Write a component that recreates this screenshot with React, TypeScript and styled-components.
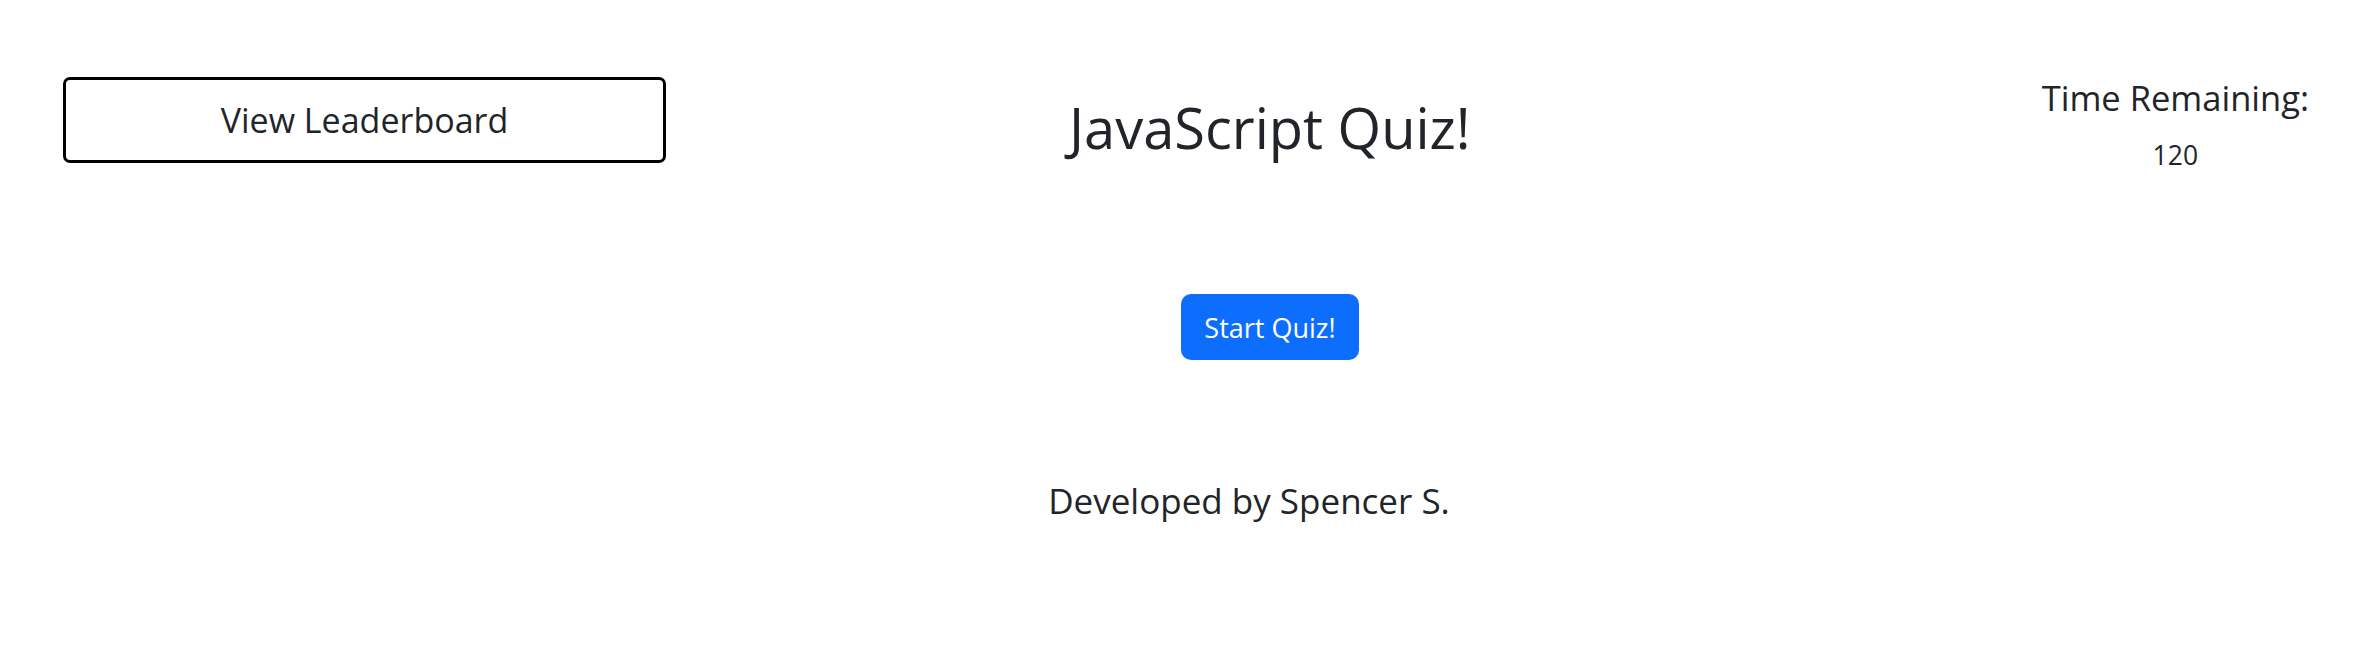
import React from "react";
import styled, { createGlobalStyle } from "styled-components";

const Global = createGlobalStyle`
  html, body { margin: 0; padding: 0; background: #fff; }
  body {
    font-family: "Open Sans", "Noto Sans", sans-serif;
    color: #212529;
  }
`;

const Page = styled.div`
  width: 2374px;
  height: 645px;
  box-sizing: border-box;
  display: flex;
  flex-direction: column;
`;

const Header = styled.header`
  display: flex;
  align-items: flex-start;
  padding: 77px 65px 0 63px;
`;

const OutlineButton = styled.button`
  width: 603px;
  height: 86px;
  box-sizing: border-box;
  border: 3px solid #000;
  border-radius: 7px;
  background: #fff;
  color: #212529;
  font-family: inherit;
  font-size: 34px;
  cursor: pointer;
`;

const Title = styled.h1`
  margin: 17px 0 0 403px;
  font-size: 56px;
  font-weight: 400;
  line-height: 1.2;
`;

const Timer = styled.div`
  margin-left: auto;
  display: flex;
  flex-direction: column;
  align-items: center;
`;

const TimerLabel = styled.h4`
  margin: 0;
  font-size: 34.5px;
  font-weight: 400;
  line-height: 1.2;
`;

const TimerValue = styled.span`
  margin-top: 22px;
  font-size: 26.5px;
  line-height: 1.2;
`;

const Section = styled.section<{ $offset: number; $top: number }>`
  display: flex;
  justify-content: center;
  padding-left: ${(p) => p.$offset * 2}px;
  margin-top: ${(p) => p.$top}px;
`;

const PrimaryButton = styled.button`
  height: 66px;
  padding: 0 23px;
  border: none;
  border-radius: 10px;
  background: #0d6efd;
  color: #fff;
  font-family: inherit;
  font-size: 27px;
  cursor: pointer;
`;

const Credit = styled.p`
  margin: 0;
  font-size: 35px;
  line-height: 1.2;
`;

export default function App() {
  return (
    <>
      <Global />
      <Page>
        <Header>
          <OutlineButton>View Leaderboard</OutlineButton>
          <Title>JavaScript Quiz!</Title>
          <Timer>
            <TimerLabel>Time Remaining:</TimerLabel>
            <TimerValue>120</TimerValue>
          </Timer>
        </Header>
        <Section $offset={83} $top={122}>
          <PrimaryButton>Start Quiz!</PrimaryButton>
        </Section>
        <Section $offset={62} $top={120}>
          <Credit>Developed by Spencer S.</Credit>
        </Section>
      </Page>
    </>
  );
}
